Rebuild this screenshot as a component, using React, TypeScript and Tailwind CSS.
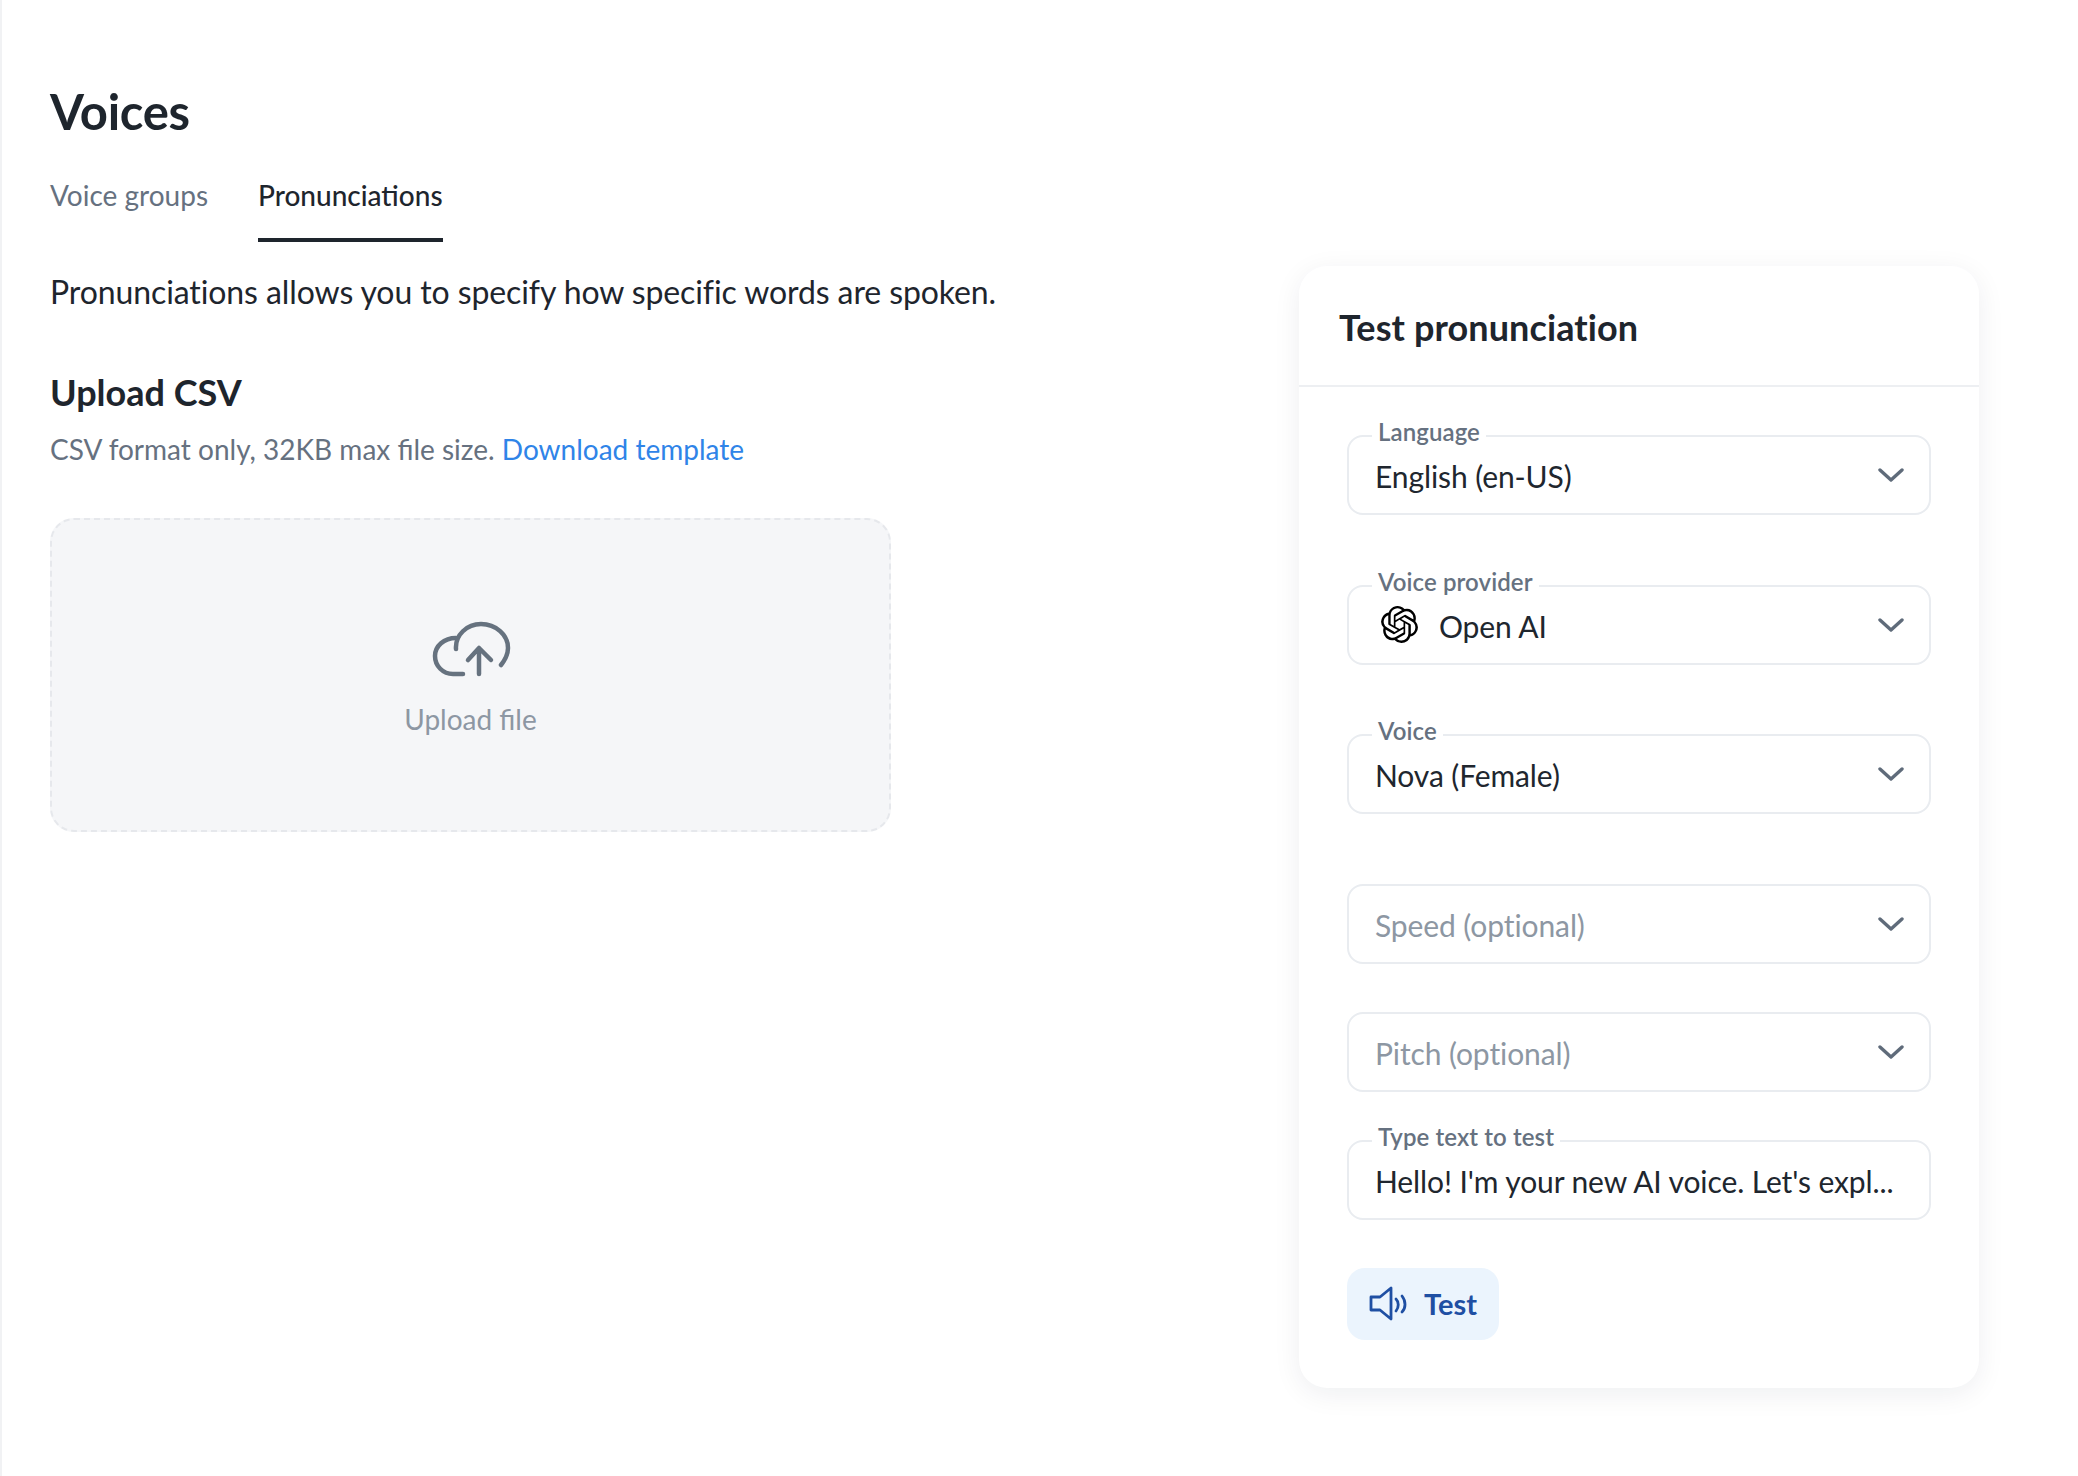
import { SiOpenai } from "react-icons/si";

function Chevron() {
  return (
    <svg width="26" height="14" viewBox="0 0 26 14" fill="none" className="shrink-0">
      <path d="M2 2l11 10L24 2" stroke="#5F6B7A" strokeWidth="3.4" strokeLinecap="round" strokeLinejoin="round" />
    </svg>
  );
}

function CloudUpload() {
  return (
    <svg width="80" height="60" viewBox="10 8 80 60" fill="none" stroke="#66727F" strokeWidth="4.5" strokeLinecap="round" strokeLinejoin="round">
      <path d="M35 27C23 27 14 35 14 45C14 55 22 63 32 63L42 63" />
      <path d="M35 38C34 24 46 13 60 13C75 13 87 24 87 37C87 43 84 49 80 54" />
      <path d="M58 63V38M47 49L58 37L70 49" />
    </svg>
  );
}

function Speaker() {
  return (
    <svg width="40" height="36" viewBox="20 15 40 36" fill="none" stroke="#1F4FA3" strokeWidth="2.8" strokeLinejoin="round" strokeLinecap="round" className="shrink-0">
      <path d="M22 26H31L42 17V48L31 39H22Z" />
      <path d="M47 28C50 31 50 36 47 40" />
      <path d="M53 25C57 30 57 37 53 41" />
    </svg>
  );
}

function Field({ label, value, placeholder, icon, chevron = true, className = "" }: { label?: string; value?: string; placeholder?: string; icon?: boolean; chevron?: boolean; className?: string }) {
  return (
    <div className={`relative flex h-[80px] items-center rounded-[16px] border-2 border-[#E9ECF0] pl-[26px] pr-[25px] ${className}`}>
      {label && (
        <span className="absolute left-[23px] top-[-19px] bg-white px-[6px] text-[24px] leading-[28px] font-semibold tracking-[0.1px] text-[#667180]">
          {label}
        </span>
      )}
      {icon && <SiOpenai className="mr-[21px] ml-[6px] mt-[-1px] shrink-0 text-black" size={37} />}
      <span className={`flex-1 truncate pt-[2px] text-[30px] leading-[36px] tracking-[-0.1px] ${placeholder ? "text-[#8D97A3]" : "text-[#20262E]"}`}>
        {value ?? placeholder}
      </span>
      {chevron && <Chevron />}
    </div>
  );
}

export default function App() {
  return (
    <div className="flex min-h-[1476px] justify-between border-l-2 border-[#F1F2F4] bg-white pl-[48px] pr-[99px] font-['Lato',sans-serif] text-[#1E252D]">
      {/* left column */}
      <div className="flex flex-col pt-[84px]">
        <h1 className="text-[49px] leading-[54px] font-bold tracking-[-0.3px]">Voices</h1>

        <div className="mt-[38px] flex gap-[50px] text-[28px] leading-[38px]">
          <span className="pb-[28px] text-[#667180]">Voice groups</span>
          <span className="border-b-[4px] border-[#1E252D] pb-[24px] font-medium">Pronunciations</span>
        </div>

        <p className="mt-[30px] text-[32px] leading-[40px] tracking-[-0.1px]">Pronunciations allows you to specify how specific words are spoken.</p>

        <h2 className="mt-[58px] text-[36px] leading-[44px] font-bold">Upload CSV</h2>
        <p className="mt-[17px] text-[28px] leading-[36px] text-[#667180]">
          CSV format only, 32KB max file size. <span className="text-[#2F84E8]">Download template</span>
        </p>

        <div className="mt-[51px] flex h-[314px] w-[841px] flex-col items-center justify-center rounded-[24px] border-2 border-dashed border-[#E6E8EC] bg-[#F5F6F8] pt-[6px]">
          <CloudUpload />
          <span className="mt-[22px] text-[28px] leading-[36px] text-[#8D97A3]">Upload file</span>
        </div>
      </div>

      {/* test card */}
      <div className="mt-[266px] h-[1122px] w-[680px] rounded-[28px] bg-white shadow-[0_6px_28px_rgba(20,30,50,0.07)]">
        <div className="flex h-[121px] items-center border-b-2 border-[#EDEFF2] px-[40px] pt-[3px]">
          <h2 className="text-[36px] leading-[44px] font-bold tracking-[0.1px]">Test pronunciation</h2>
        </div>
        <div className="flex flex-col px-[48px] pt-[48px]">
          <Field label="Language" value="English (en-US)" />
          <Field label="Voice provider" value="Open AI" icon className="mt-[70px]" />
          <Field label="Voice" value="Nova (Female)" className="mt-[69px]" />
          <Field placeholder="Speed (optional)" className="mt-[70px]" />
          <Field placeholder="Pitch (optional)" className="mt-[48px]" />
          <Field label="Type text to test" value="Hello! I'm your new AI voice. Let's expl..." chevron={false} className="mt-[48px]" />
          <div className="mt-[48px] flex h-[72px] w-[152px] items-center gap-[15px] rounded-[18px] bg-[#EBF4FD] pl-[22px]">
            <Speaker />
            <span className="text-[29px] leading-[36px] font-bold text-[#1F4FA3]">Test</span>
          </div>
        </div>
      </div>
    </div>
  );
}
